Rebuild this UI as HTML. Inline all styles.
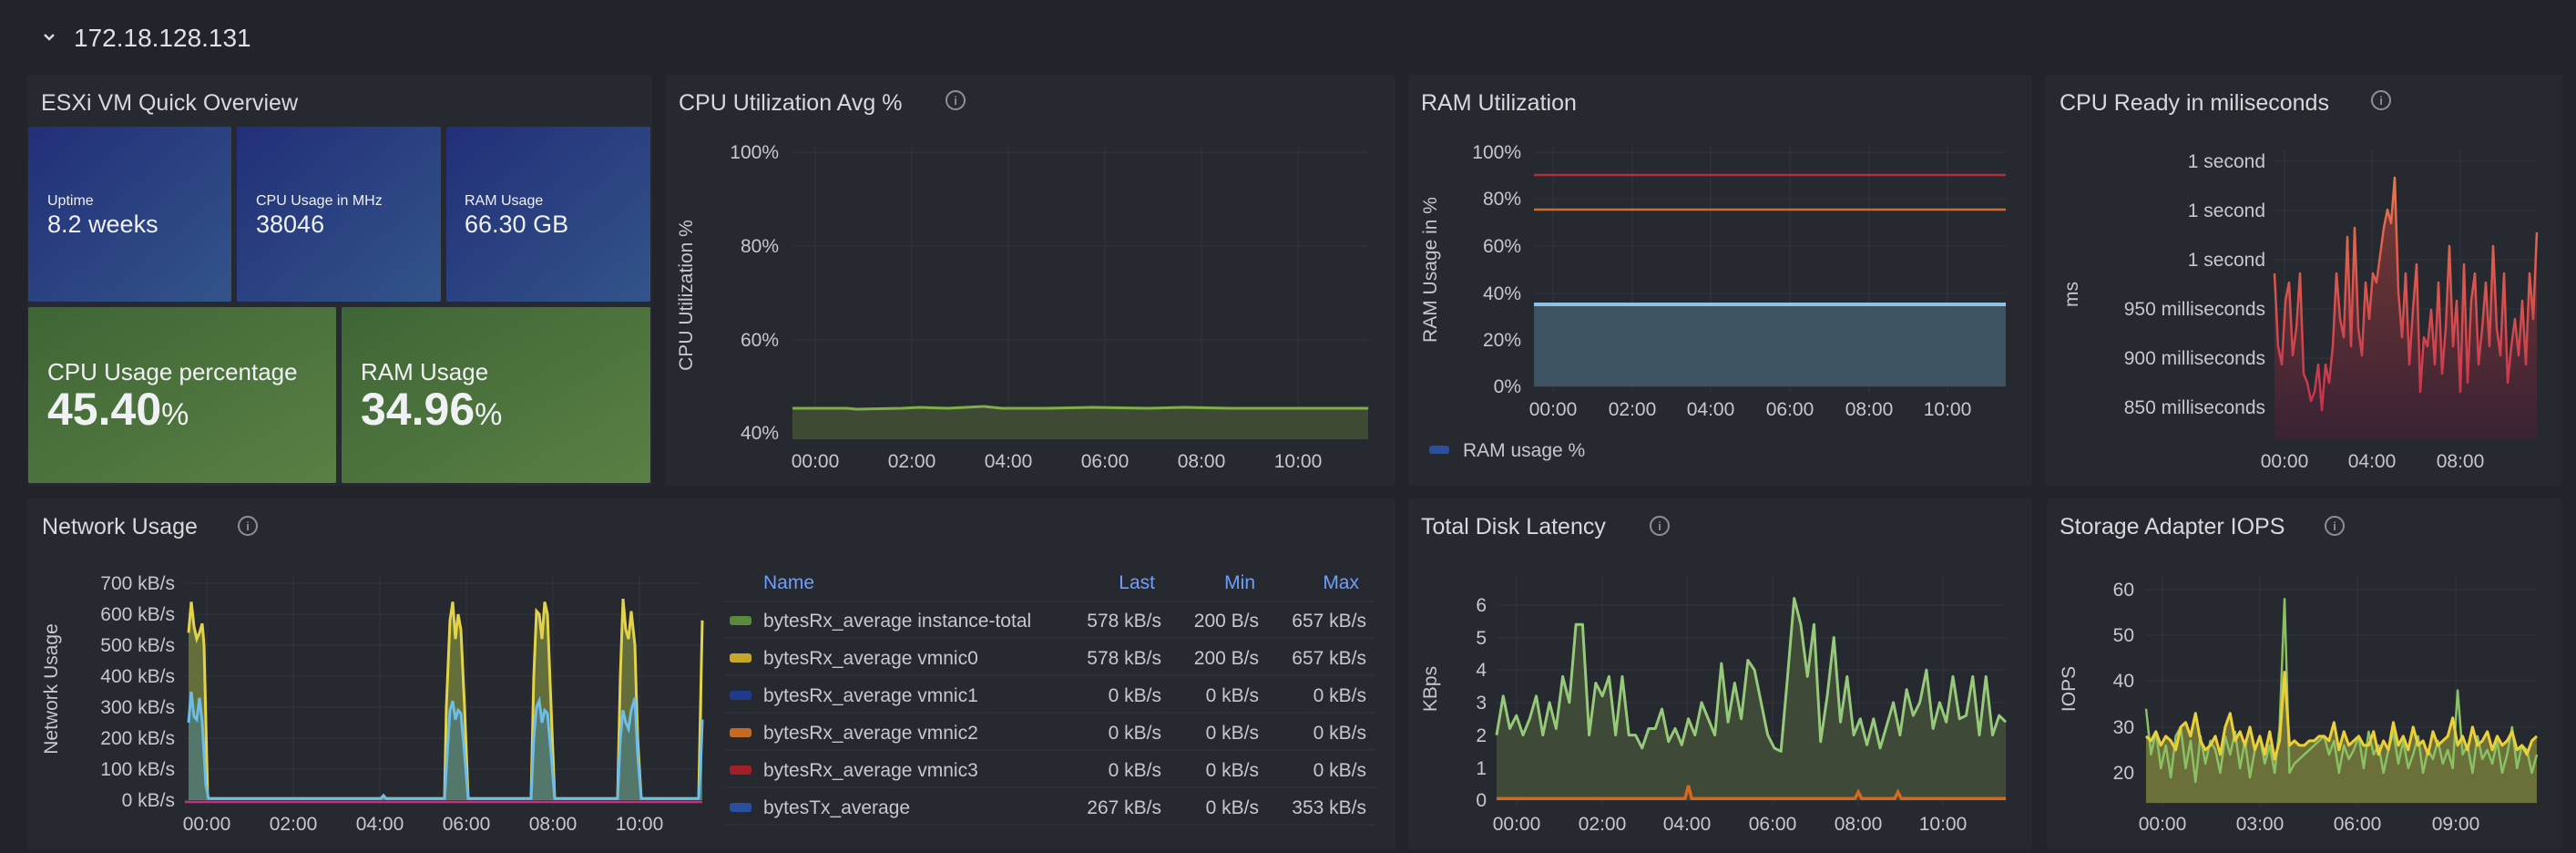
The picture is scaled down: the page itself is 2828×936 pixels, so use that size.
<!DOCTYPE html>
<html><head><meta charset="utf-8"><style>
html,body{margin:0;padding:0;background:#22232b;}
svg{display:block;font-family:"Liberation Sans",sans-serif;}
</style></head><body>
<svg width="2828" height="936" viewBox="0 0 2828 936" xmlns="http://www.w3.org/2000/svg">
<defs>
<linearGradient id="gb" x1="0" y1="0" x2="1" y2="1"><stop offset="0" stop-color="#222f78"/><stop offset="1" stop-color="#33548a"/></linearGradient>
<linearGradient id="gg" x1="0" y1="0" x2="1" y2="1"><stop offset="0" stop-color="#3e6535"/><stop offset="1" stop-color="#5b8045"/></linearGradient>
<linearGradient id="rl" gradientUnits="userSpaceOnUse" x1="0" y1="190" x2="0" y2="450"><stop offset="0" stop-color="#e9784c"/><stop offset="1" stop-color="#c8304e"/></linearGradient>
<linearGradient id="rf" gradientUnits="userSpaceOnUse" x1="0" y1="190" x2="0" y2="482"><stop offset="0" stop-color="#7a3b34"/><stop offset="1" stop-color="#3a2234"/></linearGradient>
</defs>
<rect width="2828" height="936" fill="#22232b"/>
<!-- header -->
<path d="M49,38 l5,5 l5,-5" fill="none" stroke="#d8d9dc" stroke-width="2.5"/>
<text x="81" y="51" font-size="28" fill="#e0e1e4">172.18.128.131</text>
<!-- panels -->
<g fill="#262930">
<rect x="30" y="82" width="686" height="451" rx="3"/>
<rect x="730" y="82" width="802" height="451" rx="3"/>
<rect x="1546" y="82" width="685" height="451" rx="3"/>
<rect x="2245" y="82" width="568" height="451" rx="3"/>
<rect x="30" y="547" width="1502" height="385" rx="3"/>
<rect x="1546" y="547" width="685" height="385" rx="3"/>
<rect x="2247" y="547" width="566" height="385" rx="3"/>
</g>
<g font-size="25" fill="#d8d9dc">
<text x="45" y="121">ESXi VM Quick Overview</text>
<text x="745" y="121">CPU Utilization Avg %</text>
<text x="1560" y="121">RAM Utilization</text>
<text x="2261" y="121">CPU Ready in miliseconds</text>
<text x="46" y="586">Network Usage</text>
<text x="1560" y="586">Total Disk Latency</text>
<text x="2261" y="586">Storage Adapter IOPS</text>
</g>
<g fill="none" stroke="#8e9099" stroke-width="2">
<circle cx="1049" cy="110" r="10"/><circle cx="2614" cy="110" r="10"/><circle cx="272" cy="577" r="10"/><circle cx="1822" cy="577" r="10"/><circle cx="2563" cy="577" r="10"/>
</g>
<g fill="#8e9099" font-size="13" text-anchor="middle" font-weight="bold">
<text x="1049" y="115">i</text><text x="2614" y="115">i</text><text x="272" y="582">i</text><text x="1822" y="582">i</text><text x="2563" y="582">i</text>
</g>
<!-- stat tiles -->
<rect x="31" y="139" width="223" height="192" rx="2" fill="url(#gb)"/>
<rect x="260" y="139" width="224" height="192" rx="2" fill="url(#gb)"/>
<rect x="490" y="139" width="224" height="192" rx="2" fill="url(#gb)"/>
<rect x="31" y="337" width="338" height="193" rx="2" fill="url(#gg)"/>
<rect x="375" y="337" width="339" height="193" rx="2" fill="url(#gg)"/>
<g fill="#f0f1f3">
<text x="52" y="225" font-size="16">Uptime</text><text x="52" y="255" font-size="27">8.2 weeks</text>
<text x="281" y="225" font-size="16">CPU Usage in MHz</text><text x="281" y="255" font-size="27">38046</text>
<text x="510" y="225" font-size="16">RAM Usage</text><text x="510" y="255" font-size="27">66.30 GB</text>
<text x="52" y="417" font-size="26">CPU Usage percentage</text><text x="52" y="466" font-size="50" font-weight="bold">45.40<tspan font-size="34" font-weight="normal">%</tspan></text>
<text x="396" y="417" font-size="26">RAM Usage</text><text x="396" y="466" font-size="50" font-weight="bold">34.96<tspan font-size="34" font-weight="normal">%</tspan></text>
</g>
<!-- CPU Util chart -->
<g stroke="#33363d" stroke-width="1">
<path d="M870,167H1502M870,270H1502M870,373H1502M870,475H1502"/>
<path d="M895,160V482M1001,160V482M1107,160V482M1213,160V482M1319,160V482M1425,160V482"/>
</g>
<rect x="870" y="448" width="632" height="34" fill="#3f4a35"/>
<path d="M870,448 L930,448 L940,449 L990,448 L1010,447 L1040,448 L1080,446 L1100,448 L1150,448 L1200,447 L1260,448 L1300,447 L1350,448 L1400,448 L1502,448" fill="none" stroke="#7eb046" stroke-width="3"/>
<g font-size="21" fill="#c7c8cc" text-anchor="end">
<text x="855" y="174">100%</text><text x="855" y="277">80%</text><text x="855" y="380">60%</text><text x="855" y="482">40%</text>
</g>
<g font-size="21" fill="#c7c8cc" text-anchor="middle">
<text x="895" y="513">00:00</text><text x="1001" y="513">02:00</text><text x="1107" y="513">04:00</text><text x="1213" y="513">06:00</text><text x="1319" y="513">08:00</text><text x="1425" y="513">10:00</text>
</g>
<text transform="translate(760,324) rotate(-90)" font-size="21" fill="#c7c8cc" text-anchor="middle">CPU Utilization %</text>
<!-- RAM chart -->
<g stroke="#33363d" stroke-width="1">
<path d="M1684,167H2202M1684,218H2202M1684,270H2202M1684,322H2202M1684,373H2202M1684,424H2202"/>
<path d="M1705,160V430M1792,160V430M1878,160V430M1965,160V430M2052,160V430M2138,160V430"/>
</g>
<rect x="1684" y="334" width="518" height="90" fill="#3f5565" opacity="0.95"/>
<path d="M1684,334H2202" stroke="#8ec1e6" stroke-width="4"/>
<path d="M1684,192H2202" stroke="#b3303b" stroke-width="2.5"/>
<path d="M1684,230H2202" stroke="#d36c28" stroke-width="2.5"/>
<g font-size="21" fill="#c7c8cc" text-anchor="end">
<text x="1670" y="174">100%</text><text x="1670" y="225">80%</text><text x="1670" y="277">60%</text><text x="1670" y="329">40%</text><text x="1670" y="380">20%</text><text x="1670" y="431">0%</text>
</g>
<g font-size="21" fill="#c7c8cc" text-anchor="middle">
<text x="1705" y="456">00:00</text><text x="1792" y="456">02:00</text><text x="1878" y="456">04:00</text><text x="1965" y="456">06:00</text><text x="2052" y="456">08:00</text><text x="2138" y="456">10:00</text>
</g>
<text transform="translate(1577,296) rotate(-90)" font-size="21" fill="#c7c8cc" text-anchor="middle">RAM Usage in %</text>
<rect x="1569" y="489" width="22" height="9" rx="3" fill="#2a4fa0"/>
<text x="1606" y="501" font-size="21" fill="#c7c8cc">RAM usage %</text>
<!-- CPU Ready -->
<g stroke="#33363d" stroke-width="1">
<path d="M2497,177H2785M2497,231H2785M2497,285H2785M2497,339H2785M2497,393H2785M2497,447H2785"/>
<path d="M2508,165V482M2604,165V482M2701,165V482"/>
</g>
<path d="M2497,482 L2497,300 2501,380 2505,400 2509,330 2513,310 2517,390 2521,360 2525,300 2529,410 2533,420 2537,440 2541,430 2545,400 2549,450 2553,400 2557,420 2561,380 2565,300 2569,350 2573,370 2577,260 2581,380 2585,250 2589,360 2593,390 2597,310 2601,350 2605,300 2609,310 2613,280 2617,250 2621,230 2625,245 2629,195 2633,320 2637,370 2641,300 2645,400 2649,340 2653,290 2657,430 2661,370 2665,380 2669,340 2673,400 2677,310 2681,410 2685,360 2689,270 2693,380 2697,330 2701,430 2705,290 2709,420 2713,330 2717,300 2721,400 2725,360 2729,310 2733,380 2737,270 2741,360 2745,390 2749,300 2753,420 2757,380 2761,350 2765,390 2769,330 2773,400 2777,300 2781,350 2785,255 L2785,482Z" fill="url(#rf)"/>
<path d="M2497,300 2501,380 2505,400 2509,330 2513,310 2517,390 2521,360 2525,300 2529,410 2533,420 2537,440 2541,430 2545,400 2549,450 2553,400 2557,420 2561,380 2565,300 2569,350 2573,370 2577,260 2581,380 2585,250 2589,360 2593,390 2597,310 2601,350 2605,300 2609,310 2613,280 2617,250 2621,230 2625,245 2629,195 2633,320 2637,370 2641,300 2645,400 2649,340 2653,290 2657,430 2661,370 2665,380 2669,340 2673,400 2677,310 2681,410 2685,360 2689,270 2693,380 2697,330 2701,430 2705,290 2709,420 2713,330 2717,300 2721,400 2725,360 2729,310 2733,380 2737,270 2741,360 2745,390 2749,300 2753,420 2757,380 2761,350 2765,390 2769,330 2773,400 2777,300 2781,350 2785,255" transform="translate(0,0)" fill="none" stroke="url(#rl)" stroke-width="2.5" stroke-linejoin="round"/>
<g font-size="21" fill="#c7c8cc" text-anchor="end">
<text x="2487" y="184">1 second</text><text x="2487" y="238">1 second</text><text x="2487" y="292">1 second</text><text x="2487" y="346">950 milliseconds</text><text x="2487" y="400">900 milliseconds</text><text x="2487" y="454">850 milliseconds</text>
</g>
<g font-size="21" fill="#c7c8cc" text-anchor="middle">
<text x="2508" y="513">00:00</text><text x="2604" y="513">04:00</text><text x="2701" y="513">08:00</text>
</g>
<text transform="translate(2281,323) rotate(-90)" font-size="21" fill="#c7c8cc" text-anchor="middle">ms</text>
<!-- Network -->
<g stroke="#33363d" stroke-width="1">
<path d="M203,640H771M203,674H771M203,708H771M203,742H771M203,776H771M203,810H771M203,844H771M203,878H771"/>
<path d="M227,632V884M322,632V884M417,632V884M512,632V884M607,632V884M702,632V884"/>
</g>
<g transform="translate(0,878) scale(1,-0.34)">
<path d="M207,0 L207,540 210,640 213,560 216,520 219,540 222,570 224,500 228,5 488,5 490,300 494,580 497,640 500,520 503,600 506,550 510,300 514,5 583,5 586,400 589,610 592,600 595,520 598,640 601,600 605,300 609,5 678,5 681,400 684,650 687,550 690,520 693,610 697,500 700,200 704,5 767,5 769,300 771,580 771,0Z" fill="#6f7a3c" opacity="0.85"/>
<path d="M207,540 210,640 213,560 216,520 219,540 222,570 224,500 228,5 488,5 490,300 494,580 497,640 500,520 503,600 506,550 510,300 514,5 583,5 586,400 589,610 592,600 595,520 598,640 601,600 605,300 609,5 678,5 681,400 684,650 687,550 690,520 693,610 697,500 700,200 704,5 767,5 769,300 771,580" fill="none" stroke="#e3d349" stroke-width="3" vector-effect="non-scaling-stroke"/>
<path d="M207,0 L207,250 210,350 213,270 216,260 219,330 222,250 226,50 229,5 418,5 421,15 424,5 488,5 491,150 494,290 497,320 500,260 503,290 506,280 510,150 514,5 583,5 586,200 589,300 592,320 595,250 598,290 601,280 605,150 609,5 678,5 681,200 684,290 687,250 690,230 693,290 697,330 700,150 704,5 767,5 769,100 771,260 771,0Z" fill="#4f7a78" opacity="0.8"/>
<path d="M207,250 210,350 213,270 216,260 219,330 222,250 226,50 229,5 418,5 421,15 424,5 488,5 491,150 494,290 497,320 500,260 503,290 506,280 510,150 514,5 583,5 586,200 589,300 592,320 595,250 598,290 601,280 605,150 609,5 678,5 681,200 684,290 687,250 690,230 693,290 697,330 700,150 704,5 767,5 769,100 771,260" fill="none" stroke="#6ebde8" stroke-width="3" vector-effect="non-scaling-stroke"/>
</g>
<path d="M203,880H771" stroke="#c4307c" stroke-width="2.5"/>
<g font-size="21" fill="#c7c8cc" text-anchor="end">
<text x="192" y="647">700 kB/s</text><text x="192" y="681">600 kB/s</text><text x="192" y="715">500 kB/s</text><text x="192" y="749">400 kB/s</text><text x="192" y="783">300 kB/s</text><text x="192" y="817">200 kB/s</text><text x="192" y="851">100 kB/s</text><text x="192" y="885">0 kB/s</text>
</g>
<g font-size="21" fill="#c7c8cc" text-anchor="middle">
<text x="227" y="911">00:00</text><text x="322" y="911">02:00</text><text x="417" y="911">04:00</text><text x="512" y="911">06:00</text><text x="607" y="911">08:00</text><text x="702" y="911">10:00</text>
</g>
<text transform="translate(63,756) rotate(-90)" font-size="21" fill="#c7c8cc" text-anchor="middle">Network Usage</text>
<!-- legend table -->
<g font-size="21" fill="#6e9fff">
<text x="838" y="646">Name</text>
<text x="1268" y="646" text-anchor="end">Last</text><text x="1378" y="646" text-anchor="end">Min</text><text x="1492" y="646" text-anchor="end">Max</text>
</g>
<g stroke="#2f3238" stroke-width="1.5"><path d="M795,660H1510M795,700H1510M795,741H1510M795,782H1510M795,823H1510M795,864H1510M795,905H1510"/></g>
<g><rect x="801" y="676" width="24" height="10" rx="3" fill="#5b8a3c"/><rect x="801" y="717" width="24" height="10" rx="3" fill="#c6a72c"/><rect x="801" y="758" width="24" height="10" rx="3" fill="#1f3a8a"/><rect x="801" y="799" width="24" height="10" rx="3" fill="#c56a25"/><rect x="801" y="840" width="24" height="10" rx="3" fill="#a12027"/><rect x="801" y="881" width="24" height="10" rx="3" fill="#2a4fa0"/></g>
<g font-size="21" fill="#c7c8cc">
<text x="838" y="688">bytesRx_average instance-total</text>
<text x="838" y="729">bytesRx_average vmnic0</text>
<text x="838" y="770">bytesRx_average vmnic1</text>
<text x="838" y="811">bytesRx_average vmnic2</text>
<text x="838" y="852">bytesRx_average vmnic3</text>
<text x="838" y="893">bytesTx_average</text>
</g>
<g font-size="21" fill="#c7c8cc" text-anchor="end">
<text x="1275" y="688">578 kB/s</text><text x="1382" y="688">200 B/s</text><text x="1500" y="688">657 kB/s</text>
<text x="1275" y="729">578 kB/s</text><text x="1382" y="729">200 B/s</text><text x="1500" y="729">657 kB/s</text>
<text x="1275" y="770">0 kB/s</text><text x="1382" y="770">0 kB/s</text><text x="1500" y="770">0 kB/s</text>
<text x="1275" y="811">0 kB/s</text><text x="1382" y="811">0 kB/s</text><text x="1500" y="811">0 kB/s</text>
<text x="1275" y="852">0 kB/s</text><text x="1382" y="852">0 kB/s</text><text x="1500" y="852">0 kB/s</text>
<text x="1275" y="893">267 kB/s</text><text x="1382" y="893">0 kB/s</text><text x="1500" y="893">353 kB/s</text>
</g>
<!-- Disk latency -->
<g stroke="#33363d" stroke-width="1">
<path d="M1643,664H2202M1643,700H2202M1643,735H2202M1643,771H2202M1643,807H2202M1643,843H2202M1643,878H2202"/>
<path d="M1665,632V884M1759,632V884M1852,632V884M1946,632V884M2040,632V884M2133,632V884"/>
</g>
<g transform="translate(1643,878) scale(7.26,-35.7)">
<path d="M0,0 L0,2 1,3.2 2,2.2 3,2.6 4,2 5,2.5 6,3.2 7,2 8,3 9,2.2 10,3.8 11,3 12,5.4 13,5.4 14,2 15,3.6 16,3.2 17,3.8 18,2 19,3.8 20,2 21,2 22,1.6 23,2.2 24,2.2 25,2.8 26,1.8 27,2.2 28,1.7 29,2.5 30,2 31,3 32,2.5 33,2 34,4.2 35,2.4 36,3.6 37,2.5 38,4.3 39,4 40,3 41,2 42,1.6 43,1.5 44,3.8 45,6.2 46,5.4 47,3.8 48,5.4 49,1.8 50,3.2 51,5 52,2.4 53,3.8 54,2 55,2.5 56,1.7 57,2.5 58,1.6 59,2.3 60,3 61,2 62,3.4 63,2.6 64,3 65,4 66,2.2 67,3 68,2.4 69,3.8 70,2.5 71,2.6 72,3.8 73,2 74,3.8 75,2 76,2.6 77,2.4 L77,0Z" fill="#3e4a37"/>
<path d="M0,2 1,3.2 2,2.2 3,2.6 4,2 5,2.5 6,3.2 7,2 8,3 9,2.2 10,3.8 11,3 12,5.4 13,5.4 14,2 15,3.6 16,3.2 17,3.8 18,2 19,3.8 20,2 21,2 22,1.6 23,2.2 24,2.2 25,2.8 26,1.8 27,2.2 28,1.7 29,2.5 30,2 31,3 32,2.5 33,2 34,4.2 35,2.4 36,3.6 37,2.5 38,4.3 39,4 40,3 41,2 42,1.6 43,1.5 44,3.8 45,6.2 46,5.4 47,3.8 48,5.4 49,1.8 50,3.2 51,5 52,2.4 53,3.8 54,2 55,2.5 56,1.7 57,2.5 58,1.6 59,2.3 60,3 61,2 62,3.4 63,2.6 64,3 65,4 66,2.2 67,3 68,2.4 69,3.8 70,2.5 71,2.6 72,3.8 73,2 74,3.8 75,2 76,2.6 77,2.4" fill="none" stroke="#97c97a" stroke-width="3" vector-effect="non-scaling-stroke" stroke-linejoin="round"/>
<path d="M0,0.05 L28.5,0.05 29,0.45 29.5,0.05 54.2,0.05 54.7,0.25 55.2,0.05 60.2,0.05 60.7,0.25 61.2,0.05 77,0.05" fill="none" stroke="#d6681f" stroke-width="3.5" vector-effect="non-scaling-stroke"/>
</g>
<g font-size="21" fill="#c7c8cc" text-anchor="end">
<text x="1632" y="671">6</text><text x="1632" y="707">5</text><text x="1632" y="742">4</text><text x="1632" y="778">3</text><text x="1632" y="814">2</text><text x="1632" y="850">1</text><text x="1632" y="885">0</text>
</g>
<g font-size="21" fill="#c7c8cc" text-anchor="middle">
<text x="1665" y="911">00:00</text><text x="1759" y="911">02:00</text><text x="1852" y="911">04:00</text><text x="1946" y="911">06:00</text><text x="2040" y="911">08:00</text><text x="2133" y="911">10:00</text>
</g>
<text transform="translate(1577,756) rotate(-90)" font-size="21" fill="#c7c8cc" text-anchor="middle">KBps</text>
<!-- Storage IOPS -->
<g stroke="#33363d" stroke-width="1">
<path d="M2356,647H2785M2356,697H2785M2356,747H2785M2356,798H2785M2356,848H2785"/>
<path d="M2374,632V884M2481,632V884M2588,632V884M2696,632V884"/>
</g>
<g transform="translate(2356,948.4) scale(5.43,-5.02)">
<path d="M0,13.4 L0,28 1,27 2,29 3,26 4,28 5,27 6,25 7,30 8,31 9,28 10,33 11,27 12,25 13,26 14,28 15,24 16,30 17,33 18,27 19,29 20,26 21,30 22,25 23,28 24,24 25,29 26,23 27,27 28,42 29,26 30,27 31,26 32,26 33,27 34,27 35,28 36,28 37,27 38,31 39,25 40,29 41,26 42,27 43,28 44,26 45,26 46,29 47,24 48,27 49,25 50,31 51,26 52,28 53,25 54,30 55,26 56,27 57,24 58,29 59,26 60,27 61,28 62,32 63,26 64,28 65,25 66,30 67,26 68,27 69,29 70,25 71,28 72,26 73,27 74,29 75,25 76,26 77,24 78,27 79,28 L79,13.4Z" fill="#6b6f3a"/>
<path d="M0,34 1,24 2,29 3,21 4,26 5,19 6,28 7,30 8,21 9,27 10,18 11,28 12,22 13,27 14,25 15,20 16,28 17,24 18,29 19,21 20,27 21,19 22,25 23,28 24,22 25,26 26,20 27,30 28,58 29,20 30,22 31,23 32,24 33,25 34,26 35,27 36,28 37,24 38,27 39,20 40,26 41,23 42,25 43,28 44,21 45,29 46,24 47,26 48,20 49,25 50,29 51,22 52,27 53,21 54,24 55,28 56,20 57,25 58,23 59,27 60,22 61,25 62,21 63,38 64,24 65,26 66,20 67,28 68,23 69,25 70,22 71,27 72,20 73,24 74,30 75,21 76,26 77,25 78,20 79,24" fill="none" stroke="#8cc163" stroke-width="2.5" vector-effect="non-scaling-stroke" stroke-linejoin="round"/>
<path d="M0,28 1,27 2,29 3,26 4,28 5,27 6,25 7,30 8,31 9,28 10,33 11,27 12,25 13,26 14,28 15,24 16,30 17,33 18,27 19,29 20,26 21,30 22,25 23,28 24,24 25,29 26,23 27,27 28,42 29,26 30,27 31,26 32,26 33,27 34,27 35,28 36,28 37,27 38,31 39,25 40,29 41,26 42,27 43,28 44,26 45,26 46,29 47,24 48,27 49,25 50,31 51,26 52,28 53,25 54,30 55,26 56,27 57,24 58,29 59,26 60,27 61,28 62,32 63,26 64,28 65,25 66,30 67,26 68,27 69,29 70,25 71,28 72,26 73,27 74,29 75,25 76,26 77,24 78,27 79,28" fill="none" stroke="#ecd03a" stroke-width="3" vector-effect="non-scaling-stroke" stroke-linejoin="round"/>
</g>
<g font-size="21" fill="#c7c8cc" text-anchor="end">
<text x="2343" y="654">60</text><text x="2343" y="704">50</text><text x="2343" y="754">40</text><text x="2343" y="805">30</text><text x="2343" y="855">20</text>
</g>
<g font-size="21" fill="#c7c8cc" text-anchor="middle">
<text x="2374" y="911">00:00</text><text x="2481" y="911">03:00</text><text x="2588" y="911">06:00</text><text x="2696" y="911">09:00</text>
</g>
<text transform="translate(2278,756) rotate(-90)" font-size="21" fill="#c7c8cc" text-anchor="middle">IOPS</text>
</svg>
</body></html>
